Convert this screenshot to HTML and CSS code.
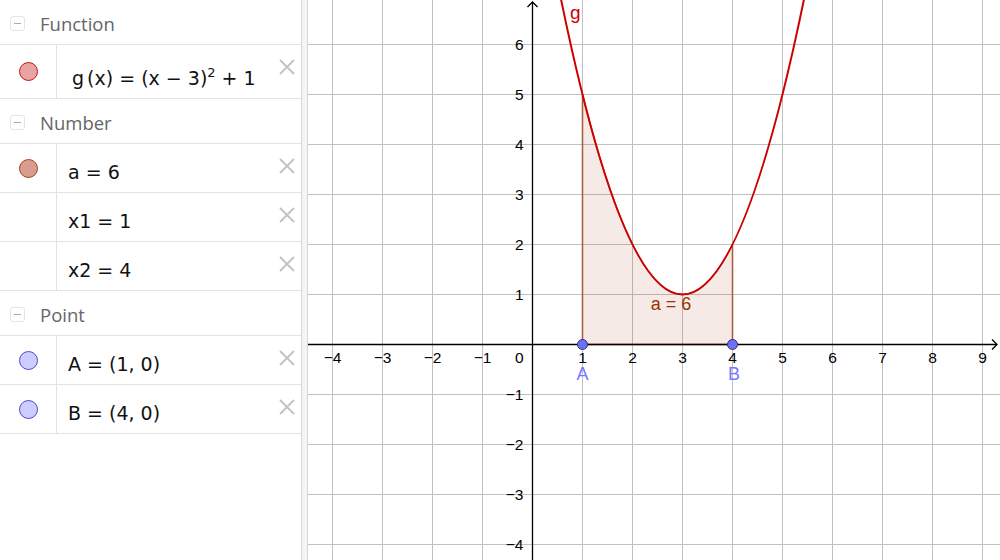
FILE: index.html
```html
<!DOCTYPE html>
<html>
<head>
<meta charset="utf-8">
<link rel="stylesheet" href="styles.css">
</head>
<body>
<div class="app">
  <aside class="algebra">
    <div class="header"><span class="toggle"></span><span class="title">Function</span></div>
    <div class="item tall">
      <div class="marker"><span class="dot dot-g"></span></div>
      <div class="formula formula-g">g<span class="gap"></span>(x) = (x − 3)<sup>2</sup> + 1</div>
      <span class="close"><svg width="16" height="16" viewBox="0 0 16 16"><path d="M1 1L15 15M15 1L1 15"/></svg></span>
    </div>
    <div class="header"><span class="toggle"></span><span class="title">Number</span></div>
    <div class="item">
      <div class="marker"><span class="dot dot-a"></span></div>
      <div class="formula">a = 6</div>
      <span class="close"><svg width="16" height="16" viewBox="0 0 16 16"><path d="M1 1L15 15M15 1L1 15"/></svg></span>
    </div>
    <div class="item">
      <div class="marker"></div>
      <div class="formula">x1 = 1</div>
      <span class="close"><svg width="16" height="16" viewBox="0 0 16 16"><path d="M1 1L15 15M15 1L1 15"/></svg></span>
    </div>
    <div class="item">
      <div class="marker"></div>
      <div class="formula">x2 = 4</div>
      <span class="close"><svg width="16" height="16" viewBox="0 0 16 16"><path d="M1 1L15 15M15 1L1 15"/></svg></span>
    </div>
    <div class="header"><span class="toggle"></span><span class="title">Point</span></div>
    <div class="item">
      <div class="marker"><span class="dot dot-p"></span></div>
      <div class="formula">A = (1, 0)</div>
      <span class="close"><svg width="16" height="16" viewBox="0 0 16 16"><path d="M1 1L15 15M15 1L1 15"/></svg></span>
    </div>
    <div class="item">
      <div class="marker"><span class="dot dot-p"></span></div>
      <div class="formula">B = (4, 0)</div>
      <span class="close"><svg width="16" height="16" viewBox="0 0 16 16"><path d="M1 1L15 15M15 1L1 15"/></svg></span>
    </div>
  </aside>
  <div class="splitter"></div>
  <main class="graphics">
    <svg class="plot" width="692" height="560" viewBox="0 0 692 560">
      <g class="grid">
        <path d="M24.5 0V560M74.5 0V560M124.5 0V560M174.5 0V560M274.5 0V560M324.5 0V560M374.5 0V560M424.5 0V560M474.5 0V560M524.5 0V560M574.5 0V560M624.5 0V560M674.5 0V560"/>
        <path d="M0 44.5H692M0 94.5H692M0 144.5H692M0 194.5H692M0 244.5H692M0 294.5H692M0 394.5H692M0 444.5H692M0 494.5H692M0 544.5H692"/>
      </g>
      <path class="area" d="M274.5 344.5L274.5 94.5Q349.5 394.5 424.5 244.5L424.5 344.5Z"/>
      <g class="axes">
        <path d="M0 344.5H689M224.5 560V2"/>
        <path d="M684 339.5L689 344.5L684 349.5M219.5 7L224.5 2L229.5 7"/>
      </g>
      <g class="ticks">
        <text x="24.5" y="363" text-anchor="middle">−4</text>
        <text x="74.5" y="363" text-anchor="middle">−3</text>
        <text x="124.5" y="363" text-anchor="middle">−2</text>
        <text x="174.5" y="363" text-anchor="middle">−1</text>
        <text x="215.5" y="363" text-anchor="end">0</text>
        <text x="274.5" y="363" text-anchor="middle">1</text>
        <text x="324.5" y="363" text-anchor="middle">2</text>
        <text x="374.5" y="363" text-anchor="middle">3</text>
        <text x="424.5" y="363" text-anchor="middle">4</text>
        <text x="474.5" y="363" text-anchor="middle">5</text>
        <text x="524.5" y="363" text-anchor="middle">6</text>
        <text x="574.5" y="363" text-anchor="middle">7</text>
        <text x="624.5" y="363" text-anchor="middle">8</text>
        <text x="674.5" y="363" text-anchor="middle">9</text>
        <text x="215.5" y="50" text-anchor="end">6</text>
        <text x="215.5" y="100" text-anchor="end">5</text>
        <text x="215.5" y="150" text-anchor="end">4</text>
        <text x="215.5" y="200" text-anchor="end">3</text>
        <text x="215.5" y="250" text-anchor="end">2</text>
        <text x="215.5" y="300" text-anchor="end">1</text>
        <text x="215.5" y="400" text-anchor="end">−1</text>
        <text x="215.5" y="450" text-anchor="end">−2</text>
        <text x="215.5" y="500" text-anchor="end">−3</text>
        <text x="215.5" y="550" text-anchor="end">−4</text>
      </g>
      <path class="curve" d="M244.5 -43.5Q374.5 632.5 504.5 -43.5"/>
      <text class="label-g" x="262" y="19">g</text>
      <text class="label-a" x="363" y="310" text-anchor="middle">a = 6</text>
      <circle class="pt" cx="274.5" cy="344.5" r="5"/>
      <circle class="pt" cx="424.5" cy="344.5" r="5"/>
      <text class="label-pt" x="274.5" y="380" text-anchor="middle">A</text>
      <text class="label-pt" x="426" y="380" text-anchor="middle">B</text>
    </svg>
  </main>
</div>
</body>
</html>
```
FILE: styles.css
```css
html, body {
  margin: 0;
  padding: 0;
  background: #fff;
}
.app {
  display: flex;
  width: 1000px;
  height: 560px;
  overflow: hidden;
}
.algebra {
  width: 301px;
  flex: none;
  background: #fff;
  font-family: "DejaVu Sans", sans-serif;
}
.splitter {
  width: 5px;
  flex: none;
  background: #f4f4f4;
  border-left: 1px solid #d6d6d6;
  border-right: 1px solid #d6d6d6;
}
.graphics {
  flex: 1;
  position: relative;
  overflow: hidden;
}
.plot {
  display: block;
}
.header {
  border-bottom: 1px solid #e2e2e2;
  display: flex;
  align-items: center;
  padding-top: 3px;
  box-sizing: border-box;
  height: 45px;
}
.toggle {
  width: 15px;
  height: 15px;
  box-sizing: border-box;
  border: 1px solid #e4e4e4;
  border-radius: 3px;
  margin-left: 10px;
  margin-right: 15px;
  position: relative;
}
.toggle::after {
  content: "";
  position: absolute;
  left: 3px;
  right: 3px;
  top: 6px;
  height: 1px;
  background: #aaa;
}
.title {
  font-family: "Open Sans", sans-serif;
  font-size: 18.5px;
  color: #666;
  line-height: 20px;
}
.item {
  display: flex;
  height: 49px;
  box-sizing: border-box;
  border-bottom: 1px solid #e2e2e2;
}
.item.tall {
  height: 54px;
}
.marker {
  width: 56px;
  flex: none;
  border-right: 1px solid #e2e2e2;
  display: flex;
  align-items: center;
  justify-content: center;
}
.dot {
  width: 19px;
  height: 19px;
  box-sizing: border-box;
  border-radius: 50%;
  border: 1px solid;
}
.dot-g {
  background: #e8a3a3;
  border-color: #d01010;
}
.dot-a {
  background: #d99d90;
  border-color: #a0441c;
}
.dot-p {
  background: #ccccff;
  border-color: #4a4ad0;
}
.formula {
  flex: 1;
  font-size: 19px;
  line-height: 22px;
  padding-top: 17px;
  padding-left: 11px;
  color: #111;
  white-space: nowrap;
}
.formula-g {
  padding-top: 22px;
  padding-left: 15px;
}
.formula-g .gap {
  display: inline-block;
  width: 3px;
}
.formula sup {
  font-size: 13px;
  line-height: 0;
  vertical-align: 8px;
}
.close {
  flex: none;
  margin-top: 14px;
  margin-right: 6px;
  width: 16px;
  height: 16px;
}
.close svg {
  display: block;
}
.close path {
  stroke: #c2c2c2;
  stroke-width: 1.8;
  fill: none;
}
.grid path {
  stroke: #c0c0c0;
  stroke-width: 1;
  fill: none;
}
.area {
  fill: rgba(153, 51, 0, 0.1);
  stroke: #a85a3a;
  stroke-width: 1.5;
}
.axes path {
  stroke: #000;
  stroke-width: 1.3;
  fill: none;
}
.ticks text {
  font-family: "Liberation Sans", Arial, sans-serif;
  font-size: 15.5px;
  fill: #000;
}
.curve {
  fill: none;
  stroke: #cc0000;
  stroke-width: 2;
}
.label-g {
  font-family: "Liberation Sans", Arial, sans-serif;
  font-size: 19px;
  fill: #cc0000;
}
.label-a {
  font-family: "Liberation Sans", Arial, sans-serif;
  font-size: 18px;
  fill: #993300;
}
.pt {
  fill: #6e6eff;
  stroke: #333366;
  stroke-width: 1;
}
.label-pt {
  font-family: "Liberation Sans", Arial, sans-serif;
  font-size: 18px;
  fill: #7878ff;
}
```
